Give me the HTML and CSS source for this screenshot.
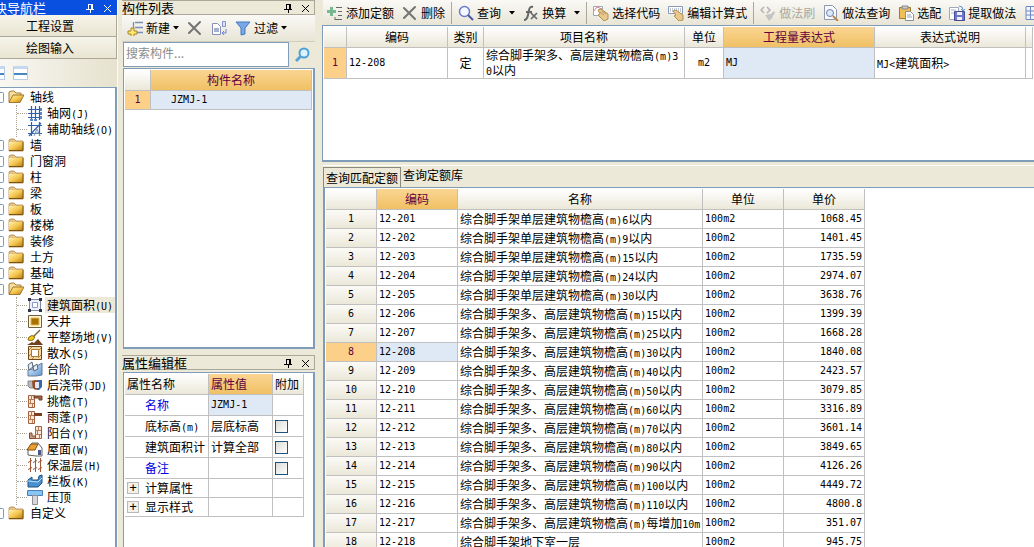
FILE: index.html
```html
<!DOCTYPE html>
<html lang="zh-CN">
<head>
<meta charset="utf-8">
<title>工程量表达式</title>
<link rel="stylesheet" href="styles.css">
</head>
<body>
<svg class="defs" aria-hidden="true">
  <defs>
    <linearGradient id="gold" x1="0" y1="0" x2="1" y2="1"><stop offset="0" stop-color="#fff0a8"/><stop offset=".5" stop-color="#f4c850"/><stop offset="1" stop-color="#b87c14"/></linearGradient>
    <linearGradient id="blue" x1="0" y1="0" x2="1" y2="1"><stop offset="0" stop-color="#e8f4ff"/><stop offset="1" stop-color="#5c98d8"/></linearGradient>
    <symbol id="folder" viewBox="0 0 16 16"><path d="M1 4q0-2 2-2h3l2 2h7v10H1z" fill="#e8c088" stroke="#b08848" stroke-width=".8"/><path d="M1 5h14v8.500H1z" fill="url(#gold)"/><path d="M1 13.500h14V5" fill="none" stroke="#7c5410"/></symbol>
    <symbol id="open" viewBox="0 0 16 16"><path d="M1 13V3l2-1h3l2 2h5v4" fill="#f7dfa0" stroke="#a87c38"/><path d="M1 13.500 5 6h11l-4 7.500z" fill="url(#gold)" stroke="#8c6010" stroke-width=".8"/></symbol>
    <symbol id="grid" viewBox="0 0 16 16"><path d="M4.500 1v14M8.500 1v14M12.500 1v14M1 4.500h14M1 8.500h14M1 12.500h14" stroke="#3060a8" stroke-width="1.200" fill="none"/><path d="M13 3h2v3h-2zM13 7h2v3h-2zM13 11h2v3h-2zM3 14h3v2H3zM7 14h3v2H7z" fill="#5a88c8"/></symbol>
    <symbol id="aux" viewBox="0 0 16 16"><path d="M4.500 1v14M12.500 1v14M1 4.500h14M1 12.500h14M2 15 14 2" stroke="#3060a8" stroke-width="1.200" fill="none"/><path d="m7 15 3-7 3 7M8 12h4" stroke="#7898c0" fill="none"/></symbol>
    <symbol id="area" viewBox="0 0 16 16"><path d="M2.500 2.500h11v11h-11z" fill="#eef0f6" stroke="#8088a8"/><path d="M5.500 5.500h5v5h-5z" fill="#fff" stroke="#8898c8"/><path d="M1 1h3v3H1zM12 1h3v3h-3zM1 12h3v3H1zM12 12h3v3h-3z" fill="#303448"/></symbol>
    <symbol id="well" viewBox="0 0 16 16"><path d="M1.500 2.500h13v12h-13z" fill="#fff6d8" stroke="#706040"/><path d="M4 5h8v7H4z" fill="#a87000" stroke="#e0b850"/></symbol>
    <symbol id="site" viewBox="0 0 16 16"><path d="M13 1 6 8" stroke="#786838" stroke-width="1.500"/><path d="M2 8q3-3 6 0l-2 3q-3 1-5 0z" fill="#f0c820" stroke="#907010"/><path d="m0 16 5-3 2 1 4-4 5 6z" fill="#704020"/></symbol>
    <symbol id="apron" viewBox="0 0 16 16"><path d="M1.500 1.500h13v13h-13z" fill="#f0d8a0" stroke="#704818"/><path d="M4.500 4.500h7v7h-7z" fill="#fff" stroke="#a87838"/><path d="m2 5 3-3M2 11l2-2m1 5 3-3m3 2 3-3m-3-4 3-3" stroke="#b88040"/></symbol>
    <symbol id="steps" viewBox="0 0 16 16"><path d="m1 9 5-1V5h4l5-3v12l-6 1H1z" fill="url(#blue)" stroke="#687890"/><path d="m1 4 4-3 1 5 4-3 1 5-4 2-1-4-4 3z" fill="#e8eef4" stroke="#586878"/></symbol>
    <symbol id="cast" viewBox="0 0 16 16"><path d="M1 4h5v7H3l-2-2z" fill="#b8b8c0" stroke="#888"/><path d="M5 4q4-2 6 0v8q-3 2-5-1z" fill="#984820"/><path d="M10 3h5v7l-3 3h-2z" fill="#3868a8"/><path d="M8 5h4v6H8z" fill="#dce8f8"/></symbol>
    <symbol id="eave" viewBox="0 0 16 16"><path d="M1.500 2.500h6v12h-6z" fill="#f8e8dc" stroke="#a06040"/><path d="M1 6.500h6M1 10.500h6M4.500 2v4M3.500 7v3M5.500 11v3" stroke="#b87850"/><path d="M7 3h8v4h-3V5H7z" fill="#a06040" stroke="#704028"/></symbol>
    <symbol id="canopy" viewBox="0 0 16 16"><path d="M1.500 2.500h6v12h-6z" fill="#f8e8dc" stroke="#a06040"/><path d="M1 6.500h6M1 10.500h6M4.500 2v4M3.500 7v3M5.500 11v3" stroke="#b87850"/><path d="M7 4h8v3H7z" fill="#784020"/></symbol>
    <symbol id="balcony" viewBox="0 0 16 16"><path d="M8.500 1.500h6v12h-6z" fill="#f8e8dc" stroke="#a06040"/><path d="M8 5.500h6M8 9.500h6M11.500 2v3M10.500 6v3M12.500 10v3" stroke="#b87850"/><path d="M2.500 8v5.500h6V11H5V8z" fill="#c89880" stroke="#884c30"/></symbol>
    <symbol id="roof" viewBox="0 0 16 16"><path d="m1 8 4-6h6l4 5v8H9L1 14z" fill="#fff" stroke="#606060"/><path d="m0 9 4-6h7L8 9z" fill="#e8a030" stroke="#885010"/><path d="M11 9h3v5h-3z" fill="#485888"/></symbol>
    <symbol id="insul" viewBox="0 0 16 16"><path d="M3.500 1v14M8.500 1v14M13.500 1v14M1 5.500l4-2m1 2 4-2m1 2 4-2M1 12.500l4-2m1 2 4-2m1 2 4-2" stroke="#a05838" fill="none"/></symbol>
    <symbol id="rail" viewBox="0 0 16 16"><path d="m1 7 4-3v3h6l1-4 3-1v8l-4 4H1z" fill="#4890d0" stroke="#205080"/><path d="m1 8 10 1 4-4" stroke="#b8e0ff" fill="none"/></symbol>
    <symbol id="cap" viewBox="0 0 16 16"><path d="M.5 1.500h15v5H.5z" fill="#88c4f4" stroke="#4880b8"/><path d="M5.500 6.500h5v9h-5z" fill="#d8d8dc" stroke="#909098"/></symbol>
    <symbol id="new" viewBox="0 0 16 16"><path d="M8 2.500h8M8 7.500h8M8 12.500h8M6.500 2v8" stroke="#7890b8" stroke-width="1.300"/><path d="M4 8h3v3h3v3H7v3H4v-3H1v-3h3z" fill="#ffe878" stroke="#a88420"/></symbol>
    <symbol id="del" viewBox="0 0 16 16"><path d="m2 3 11 11M13 2 2 13" stroke="#747474" stroke-width="2" stroke-linecap="round"/></symbol>
    <symbol id="copy" viewBox="0 0 16 16"><path d="M1.500 3.500h5l3 3v8h-8z" fill="#fff" stroke="#8890b8"/><path d="M3 8h5v4H3z" fill="#a8b0d0"/><path d="M11.500 1.500h3v5h-3z" fill="#dde4ff" stroke="#8090d0"/><path d="M15 9v4h-4m2-2-2 2 2 2" stroke="#6880d8" fill="none"/></symbol>
    <symbol id="funnel" viewBox="0 0 16 16"><path d="M1 2h14l-5 6v6l-4 1V8z" fill="#78a8e8" stroke="#4878c0"/></symbol>
    <symbol id="find" viewBox="0 0 16 16"><circle cx="9" cy="6" r="4.500" fill="#dcf2ff" stroke="#4ca0d8" stroke-width="2"/><path d="m6 9-5 5" stroke="#58a4d8" stroke-width="3"/></symbol>
    <symbol id="addrow" viewBox="0 0 16 16"><path d="M3 2h3v3h3v3H6v3H3V8H0V5h3z" fill="#78b890"/><path d="M9 2.500h6M11 6.500h4M11 10.500h4M8 14.500h7M8 12v3" stroke="#686868"/></symbol>
    <symbol id="mag" viewBox="0 0 16 16"><circle cx="6.500" cy="6.500" r="5" fill="#f4f8ff" stroke="#6c7cc8" stroke-width="1.500"/><path d="m10 10 5 5" stroke="#4858a8" stroke-width="2"/></symbol>
    <symbol id="fx" viewBox="0 0 16 16"><path d="M1 15q3 0 4-5l1-5q1-4 4-3M3 7h6" stroke="#646868" stroke-width="2" fill="none"/><path d="m8 8 6 6M14 8l-6 6" stroke="#646868" stroke-width="1.700"/></symbol>
    <symbol id="pick" viewBox="0 0 16 16"><path d="M.5 1.500h9v9h-9z" fill="#fff" stroke="#a0a8c0"/><path d="m1 6 3-4 5 2" stroke="#d88080" fill="none"/><path d="m5 5 3-1 7 5v5l-4 2-6-6 2-1z" fill="#e8c88c" stroke="#b09050"/><path d="m7 7 4 3m-2-4 4 3" stroke="#b89858"/></symbol>
    <symbol id="edit" viewBox="0 0 16 16"><path d="M.5 1.500h14v7H.5z" fill="#fff" stroke="#8898b8"/><path d="M2 4h11M2 6h11" stroke="#8090b0" stroke-dasharray="1 1"/><path d="m5 6 3-1 7 5v5l-4 1-5-5 2-1z" fill="#e8c88c" stroke="#b09050"/></symbol>
    <symbol id="brush" viewBox="0 0 16 16"><path d="M4 2 1 5l3 3m3-6 3 3-3 3" stroke="#b4b4b4" stroke-width="1.500" fill="none"/><path d="m14 6-4 4 2 2 3-4zM10 9l-5 1 4 6 4-4z" fill="#c4c4c4"/></symbol>
    <symbol id="pagefind" viewBox="0 0 16 16"><path d="M1.500.5h8l4 4v10h-12z" fill="#f8faff" stroke="#9098b0"/><circle cx="7" cy="8" r="3.500" fill="#dceaf8" stroke="#7080a8"/><path d="m10 11 5 5" stroke="#b88848" stroke-width="2"/></symbol>
    <symbol id="clip" viewBox="0 0 16 16"><path d="M1.500 2.500h11v11h-11z" fill="#f0c058" stroke="#a07830"/><path d="M4 1h6v3H4z" fill="#c8c8c8" stroke="#888"/><path d="M7.500 6.500h5l3 3v6h-8z" fill="#fff" stroke="#8890a0"/><path d="M9 10h4m-4 2h5" stroke="#90a0c0"/></symbol>
    <symbol id="save" viewBox="0 0 16 16"><path d="M.5 2.500h9v12h-9z" fill="#fff" stroke="#a0a8c0"/><path d="M2 5h5M2 8h4" stroke="#a0b0d0"/><path d="M5.500 6.500h10v9h-10z" fill="#7078c8" stroke="#484c98"/><path d="M8 7h5v3H8zM8 12h5v3H8z" fill="#eef"/><path d="M10 1q4 0 4 4m-2-1 2 2 2-2" stroke="#6090d0" fill="none"/></symbol>
    <symbol id="sheet" viewBox="0 0 16 16"><path d="M2 1.500h13v13H2zM2 6h13M2 10h13M6.500 2v12M11 2v12" fill="#f0f4ff" stroke="#7088c0"/></symbol>
    <symbol id="pin" viewBox="0 0 10 10"><path d="M3 1.500h5M3.500 1v5M7 1v5M1 6.500h8M5.500 7v3" stroke="currentColor" fill="none"/><path d="M6 1h2v5H6z" fill="currentColor"/></symbol>
    <symbol id="close" viewBox="0 0 10 10"><path d="m1 2 7 7M8 2 1 9" stroke="currentColor" fill="none"/></symbol>
    <symbol id="arrow" viewBox="0 0 6 4"><path d="M0 0h6L3 3.500z" fill="#000"/></symbol>
  </defs>
</svg>
<div class="app">
  <nav class="nav">
    <header class="title title-active"><span class="title-text">块导航栏</span>
      <button class="mini" aria-label="固定"><svg><use href="#pin"/></svg></button><button class="mini" aria-label="关闭"><svg><use href="#close"/></svg></button></header>
    <button class="nav-button">工程设置</button>
    <button class="nav-button">绘图输入</button>
    <div class="nav-tools"><button class="fold" aria-label="展开"></button><button class="fold" aria-label="折叠"></button></div>
    <ul class="tree">
      <li><div class="node"><svg><use href="#open"/></svg>轴线</div>
        <ul class="branch">
          <li class="leaf"><svg><use href="#grid"/></svg><span>轴网<i>(J)</i></span></li>
          <li class="leaf"><svg><use href="#aux"/></svg><span>辅助轴线<i>(O)</i></span></li>
        </ul></li>
      <li><div class="node"><svg><use href="#folder"/></svg>墙</div></li>
      <li><div class="node"><svg><use href="#folder"/></svg>门窗洞</div></li>
      <li><div class="node"><svg><use href="#folder"/></svg>柱</div></li>
      <li><div class="node"><svg><use href="#folder"/></svg>梁</div></li>
      <li><div class="node"><svg><use href="#folder"/></svg>板</div></li>
      <li><div class="node"><svg><use href="#folder"/></svg>楼梯</div></li>
      <li><div class="node"><svg><use href="#folder"/></svg>装修</div></li>
      <li><div class="node"><svg><use href="#folder"/></svg>土方</div></li>
      <li><div class="node"><svg><use href="#folder"/></svg>基础</div></li>
      <li><div class="node"><svg><use href="#open"/></svg>其它</div>
        <ul class="branch">
          <li class="leaf"><svg><use href="#area"/></svg><span class="chosen">建筑面积<i>(U)</i></span></li>
          <li class="leaf"><svg><use href="#well"/></svg><span>天井</span></li>
          <li class="leaf"><svg><use href="#site"/></svg><span>平整场地<i>(V)</i></span></li>
          <li class="leaf"><svg><use href="#apron"/></svg><span>散水<i>(S)</i></span></li>
          <li class="leaf"><svg><use href="#steps"/></svg><span>台阶</span></li>
          <li class="leaf"><svg><use href="#cast"/></svg><span>后浇带<i>(JD)</i></span></li>
          <li class="leaf"><svg><use href="#eave"/></svg><span>挑檐<i>(T)</i></span></li>
          <li class="leaf"><svg><use href="#canopy"/></svg><span>雨蓬<i>(P)</i></span></li>
          <li class="leaf"><svg><use href="#balcony"/></svg><span>阳台<i>(Y)</i></span></li>
          <li class="leaf"><svg><use href="#roof"/></svg><span>屋面<i>(W)</i></span></li>
          <li class="leaf"><svg><use href="#insul"/></svg><span>保温层<i>(H)</i></span></li>
          <li class="leaf"><svg><use href="#rail"/></svg><span>栏板<i>(K)</i></span></li>
          <li class="leaf"><svg><use href="#cap"/></svg><span>压顶</span></li>
        </ul></li>
      <li><div class="node"><svg><use href="#folder"/></svg>自定义</div></li>
    </ul>
  </nav>

  <aside class="side">
    <header class="title"><span class="title-text">构件列表</span>
      <button class="mini" aria-label="固定"><svg><use href="#pin"/></svg></button><button class="mini" aria-label="关闭"><svg><use href="#close"/></svg></button></header>
    <div class="toolbar side-tools">
      <button class="tool"><svg><use href="#new"/></svg>新建<svg class="arrow"><use href="#arrow"/></svg></button>
      <button class="tool" aria-label="删除"><svg><use href="#del"/></svg></button>
      <button class="tool" aria-label="复制"><svg><use href="#copy"/></svg></button>
      <button class="tool"><svg><use href="#funnel"/></svg>过滤<svg class="arrow"><use href="#arrow"/></svg></button>
    </div>
    <div class="search"><input type="text" placeholder="搜索构件..." aria-label="搜索构件"><button class="tool" aria-label="搜索"><svg><use href="#find"/></svg></button></div>
    <div class="frame list-frame">
      <table class="list">
        <colgroup><col class="c-index"><col></colgroup>
        <tr><th></th><th class="hot">构件名称</th></tr>
        <tr><td class="mark">1</td><td class="pick mono indent">JZMJ-1</td></tr>
      </table>
    </div>
    <header class="title"><span class="title-text">属性编辑框</span>
      <button class="mini" aria-label="固定"><svg><use href="#pin"/></svg></button><button class="mini" aria-label="关闭"><svg><use href="#close"/></svg></button></header>
    <div class="frame props-frame">
      <table class="props">
        <colgroup><col class="c-name"><col class="c-value"><col class="c-extra"></colgroup>
        <tr><th>属性名称</th><th class="hot">属性值</th><th>附加</th></tr>
        <tr><td class="key link">名称</td><td class="pick mono">JZMJ-1</td><td></td></tr>
        <tr><td class="key"><label for="p1">底标高<i>(m)</i></label></td><td>层底标高</td><td><input type="checkbox" id="p1"></td></tr>
        <tr><td class="key"><label for="p2">建筑面积计</label></td><td>计算全部</td><td><input type="checkbox" id="p2"></td></tr>
        <tr><td class="key link"><label for="p3">备注</label></td><td></td><td><input type="checkbox" id="p3"></td></tr>
        <tr class="group"><td><div class="expand"><button aria-label="展开计算属性">+</button>计算属性</div></td><td></td><td></td></tr>
        <tr class="group"><td><div class="expand"><button aria-label="展开显示样式">+</button>显示样式</div></td><td></td><td></td></tr>
      </table>
    </div>
  </aside>

  <main class="main">
    <div class="toolbar main-tools">
      <button class="tool"><svg><use href="#addrow"/></svg>添加定额</button>
      <button class="tool"><svg><use href="#del"/></svg>删除</button>
      <span class="sep"></span>
      <button class="tool"><svg><use href="#mag"/></svg>查询<svg class="arrow"><use href="#arrow"/></svg></button>
      <button class="tool"><svg><use href="#fx"/></svg>换算<svg class="arrow"><use href="#arrow"/></svg></button>
      <span class="sep"></span>
      <button class="tool"><svg><use href="#pick"/></svg>选择代码</button>
      <button class="tool"><svg><use href="#edit"/></svg>编辑计算式</button>
      <span class="sep"></span>
      <button class="tool" disabled><svg><use href="#brush"/></svg>做法刷</button>
      <button class="tool"><svg><use href="#pagefind"/></svg>做法查询</button>
      <button class="tool"><svg><use href="#clip"/></svg>选配</button>
      <button class="tool"><svg><use href="#save"/></svg>提取做法</button>
      <button class="tool" aria-label="表格"><svg><use href="#sheet"/></svg></button>
    </div>
    <div class="frame work-frame">
      <table class="work">
        <colgroup><col class="w-index"><col class="w-code"><col class="w-kind"><col class="w-name"><col class="w-unit"><col class="w-expr"><col class="w-expr"><col></colgroup>
        <tr><th></th><th>编码</th><th>类别</th><th>项目名称</th><th>单位</th><th class="hot">工程量表达式</th><th>表达式说明</th><th></th></tr>
        <tr><td class="mark">1</td><td class="mono">12-208</td><td class="center">定</td><td class="wrap">综合脚手架多、高层建筑物檐高<i>(m)3</i><br><i>0</i>以内</td><td class="center mono">m2</td><td class="pick mono">MJ</td><td><i>MJ&lt;</i>建筑面积<i>&gt;</i></td><td></td></tr>
      </table>
    </div>
    <div class="tabs" role="tablist"><button class="tab tab-on" role="tab" aria-selected="true">查询匹配定额</button><button class="tab" role="tab" aria-selected="false">查询定额库</button></div>
    <div class="frame quota-frame">
      <table class="quota">
        <colgroup><col class="q-index"><col class="q-code"><col class="q-name"><col class="q-unit"><col class="q-unit"></colgroup>
        <tr><th></th><th class="hot">编码</th><th>名称</th><th>单位</th><th>单价</th></tr>
        <tr><td>1</td><td>12-201</td><td>综合脚手架单层建筑物檐高<i>(m)6</i>以内</td><td>100m2</td><td>1068.45</td></tr>
        <tr><td>2</td><td>12-202</td><td>综合脚手架单层建筑物檐高<i>(m)9</i>以内</td><td>100m2</td><td>1401.45</td></tr>
        <tr><td>3</td><td>12-203</td><td>综合脚手架单层建筑物檐高<i>(m)15</i>以内</td><td>100m2</td><td>1735.59</td></tr>
        <tr><td>4</td><td>12-204</td><td>综合脚手架单层建筑物檐高<i>(m)24</i>以内</td><td>100m2</td><td>2974.07</td></tr>
        <tr><td>5</td><td>12-205</td><td>综合脚手架单层建筑物檐高<i>(m)30</i>以内</td><td>100m2</td><td>3638.76</td></tr>
        <tr><td>6</td><td>12-206</td><td>综合脚手架多、高层建筑物檐高<i>(m)15</i>以内</td><td>100m2</td><td>1399.39</td></tr>
        <tr><td>7</td><td>12-207</td><td>综合脚手架多、高层建筑物檐高<i>(m)25</i>以内</td><td>100m2</td><td>1668.28</td></tr>
        <tr class="current"><td>8</td><td>12-208</td><td>综合脚手架多、高层建筑物檐高<i>(m)30</i>以内</td><td>100m2</td><td>1840.08</td></tr>
        <tr><td>9</td><td>12-209</td><td>综合脚手架多、高层建筑物檐高<i>(m)40</i>以内</td><td>100m2</td><td>2423.57</td></tr>
        <tr><td>10</td><td>12-210</td><td>综合脚手架多、高层建筑物檐高<i>(m)50</i>以内</td><td>100m2</td><td>3079.85</td></tr>
        <tr><td>11</td><td>12-211</td><td>综合脚手架多、高层建筑物檐高<i>(m)60</i>以内</td><td>100m2</td><td>3316.89</td></tr>
        <tr><td>12</td><td>12-212</td><td>综合脚手架多、高层建筑物檐高<i>(m)70</i>以内</td><td>100m2</td><td>3601.14</td></tr>
        <tr><td>13</td><td>12-213</td><td>综合脚手架多、高层建筑物檐高<i>(m)80</i>以内</td><td>100m2</td><td>3849.65</td></tr>
        <tr><td>14</td><td>12-214</td><td>综合脚手架多、高层建筑物檐高<i>(m)90</i>以内</td><td>100m2</td><td>4126.26</td></tr>
        <tr><td>15</td><td>12-215</td><td>综合脚手架多、高层建筑物檐高<i>(m)100</i>以内</td><td>100m2</td><td>4449.72</td></tr>
        <tr><td>16</td><td>12-216</td><td>综合脚手架多、高层建筑物檐高<i>(m)110</i>以内</td><td>100m2</td><td>4800.8</td></tr>
        <tr><td>17</td><td>12-217</td><td>综合脚手架多、高层建筑物檐高<i>(m)</i>每增加<i>10m</i></td><td>100m2</td><td>351.07</td></tr>
        <tr><td>18</td><td>12-218</td><td>综合脚手架地下室一层</td><td>100m2</td><td>945.75</td></tr>
      </table>
    </div>
  </main>
</div>
</body>
</html>
```
FILE: styles.css
```css
* { box-sizing: border-box; }
body {
  margin: 0;
  background: #ece9d8;
  color: #000;
  font: 12px/16px "Noto Sans CJK SC", sans-serif;
}
button, input { font: inherit; color: inherit; }
button { border: 0; padding: 0; background: none; white-space: nowrap; }
svg { width: 16px; height: 16px; flex: none; display: block; overflow: visible; }
.defs { position: absolute; width: 0; height: 0; }
i, .mono { font-family: "DejaVu Sans Mono", monospace; font-size: 10px; font-style: normal; }
i { line-height: 12px; }

.app { display: flex; gap: 4px; height: 100vh; overflow: hidden; }
.nav { flex: 0 0 118px; display: flex; flex-direction: column; border-right: 1px solid #fbfaf4; min-height: 0; }
.side { flex: 0 0 193px; display: flex; flex-direction: column; min-height: 0; }
.main { flex: 1; min-width: 0; display: flex; flex-direction: column; margin-left: 3px; }

.title { flex: none; display: flex; align-items: center; gap: 8px; height: 15px; padding-right: 3px; border: 1px solid #aca899; border-left: 0; font-size: 13px; line-height: 13px; }
.title-text { flex: 1; white-space: nowrap; }
.title-active { background: #0a50e0; border-color: #0a50e0; color: #fff; }
.title-active .title-text { margin-left: -6px; }
.mini svg { width: 10px; height: 10px; }

.nav-button { flex: none; height: 22px; border-bottom: 1px solid #aca899; border-right: 1px solid #aca899; padding-right: 16px; background: linear-gradient(#f6f4ea, #e9e5d2); }
.nav-tools { flex: none; display: flex; align-items: center; gap: 8px; height: 28px; background: linear-gradient(90deg, #f8f7f2, #e6e2cf); }
.fold { width: 15px; height: 14px; border: 1px solid #b8cce4; border-top: 3px solid #c4d8f0; background: linear-gradient(#fff 4px, #4888c0 4px, #4888c0 6px, #fff 6px); }
.fold:first-child { width: 5px; border-left: 0; }

.tree { flex: 1; margin: 0; padding: 1px 0 0; list-style: none; background: #fff; border: 1px solid #7f9db9; border-left: 0; border-right-width: 2px; border-bottom: 0; overflow: hidden; white-space: nowrap; }
.node { display: flex; align-items: center; gap: 6px; height: 16px; }
.node::before { content: ""; width: 3px; height: 9px; margin-right: -5px; border: 1px solid #7f9db9; border-left: 0; border-radius: 0 2px 2px 0; }
.node svg { margin-left: 3px; }
.branch { margin: 0 0 0 16px; padding: 0; list-style: none; border-left: 1px dotted #a8a494; }
.leaf { display: flex; align-items: center; height: 16px; }
.leaf::before { content: ""; width: 10px; border-top: 1px dotted #a8a494; }
.leaf span { margin-left: 2px; padding: 0 2px; }
.leaf .chosen { background: #ece9d8; }

.toolbar { flex: none; display: flex; align-items: center; overflow: hidden; background: linear-gradient(#faf9f6, #e8e5d6); border-bottom: 1px solid #d2cebd; }
.tool { flex: none; display: flex; align-items: center; gap: 3px; padding: 0 4px; }
.tool:disabled { color: #aca899; }
.arrow { width: 6px; height: 4px; margin-left: 5px; }
.sep { flex: none; width: 1px; height: 22px; margin: 0 2px; background: #aca899; }
.side-tools { height: 27px; padding-left: 1px; }
.side-tools .arrow { margin-left: 0; }
.main-tools { height: 25px; margin-left: 1px; border-bottom: 0; }

.search { flex: none; display: flex; height: 25px; margin-left: 1px; gap: 2px; }
.search input { flex: 1; min-width: 0; border: 1px solid #7f9db9; padding: 0 2px 4px; background: #fff; }
.search input::placeholder { color: #8c8c8c; opacity: 1; }

.frame { background: #fff; border: 1px solid #7f9db9; overflow: hidden; padding: 1px; margin-left: 1px; }
.list-frame { flex: none; height: 281px; margin-top: 1px; margin-bottom: 6px; border-width: 1px 2px 2px 1px; }
.props-frame { flex: 1; margin-top: 2px; border-right-width: 2px; border-bottom: 0; }

table { border-collapse: separate; border-spacing: 0; table-layout: fixed; }
th, td { padding: 0 2px; border-right: 1px solid #c0c0c0; border-bottom: 1px solid #c0c0c0; white-space: nowrap; overflow: hidden; text-align: left; font-weight: normal; line-height: 16px; }
th { height: 21px; text-align: center; background: linear-gradient(#fff, #ebe8d9); }
.hot { background: linear-gradient(#fad592, #f0c064); color: #600040; }
.pick { background: #dfe8f5; }
.mark { background: #fdd08a; color: #600040; text-align: center; font-family: "DejaVu Sans Mono", monospace; font-size: 10px; }
.center { text-align: center; }

.list { width: 100%; }
.list td { height: 19px; }
.c-index { width: 26px; }
.list .indent { padding-left: 20px; }
.props { width: 179px; }
.c-name { width: 84px; }
.c-value { width: 64px; }
.c-extra { width: 31px; }
.props th { text-align: left; padding-right: 0; }
.props td { height: 21px; }
.props .key { padding: 0 0 0 20px; }
.props .group td { height: 19px; }
.link { color: #0000e0; }
.expand { display: flex; align-items: center; gap: 6px; }
.expand button { width: 12px; height: 12px; border: 1px solid #b8b8b8; background: #f2f0e8; font: 12px/9px "DejaVu Sans Mono", monospace; }
.props input { appearance: none; display: block; width: 13px; height: 13px; margin: 0; border: 1px solid #1c5180; background: linear-gradient(135deg, #dcdcd7, #fff); }

.work-frame { flex: none; height: 137px; margin-left: 0; border-right: 0; border-bottom-width: 2px; }
.work { width: 100%; }
.work td { height: 29px; }
.work .wrap { line-height: 13px; }
.w-index { width: 23px; }
.w-code { width: 101px; }
.w-kind { width: 36px; }
.w-name { width: 201px; }
.w-unit { width: 39px; }
.w-expr { width: 151px; }

.tabs { flex: none; display: flex; height: 22px; margin-top: 3px; margin-left: 1px; border-top: 1px solid #fff; }
.tab { padding: 0 2px 4px; }
.tab-on { margin-top: 1px; padding: 1px 2px 0; border: 1px solid #8c8a7c; border-bottom: 0; }
.quota-frame { flex: 1; min-height: 0; border-width: 1px 0 0 2px; }
.quota { width: 539px; }
.quota td { height: 19px; }
.quota td:not(:nth-child(3)) { font-family: "DejaVu Sans Mono", monospace; font-size: 10px; }
.quota td:first-child { text-align: center; background: linear-gradient(#fbfaf6, #ebe8d9); }
.quota td:last-child { text-align: right; }
.q-index { width: 51px; }
.q-code { width: 81px; }
.q-name { width: 245px; }
.q-unit { width: 81px; }
.quota .current td:first-child { background: #fdd08a; color: #600040; }
.quota .current td:nth-child(2) { background: #dfe8f5; }
```
